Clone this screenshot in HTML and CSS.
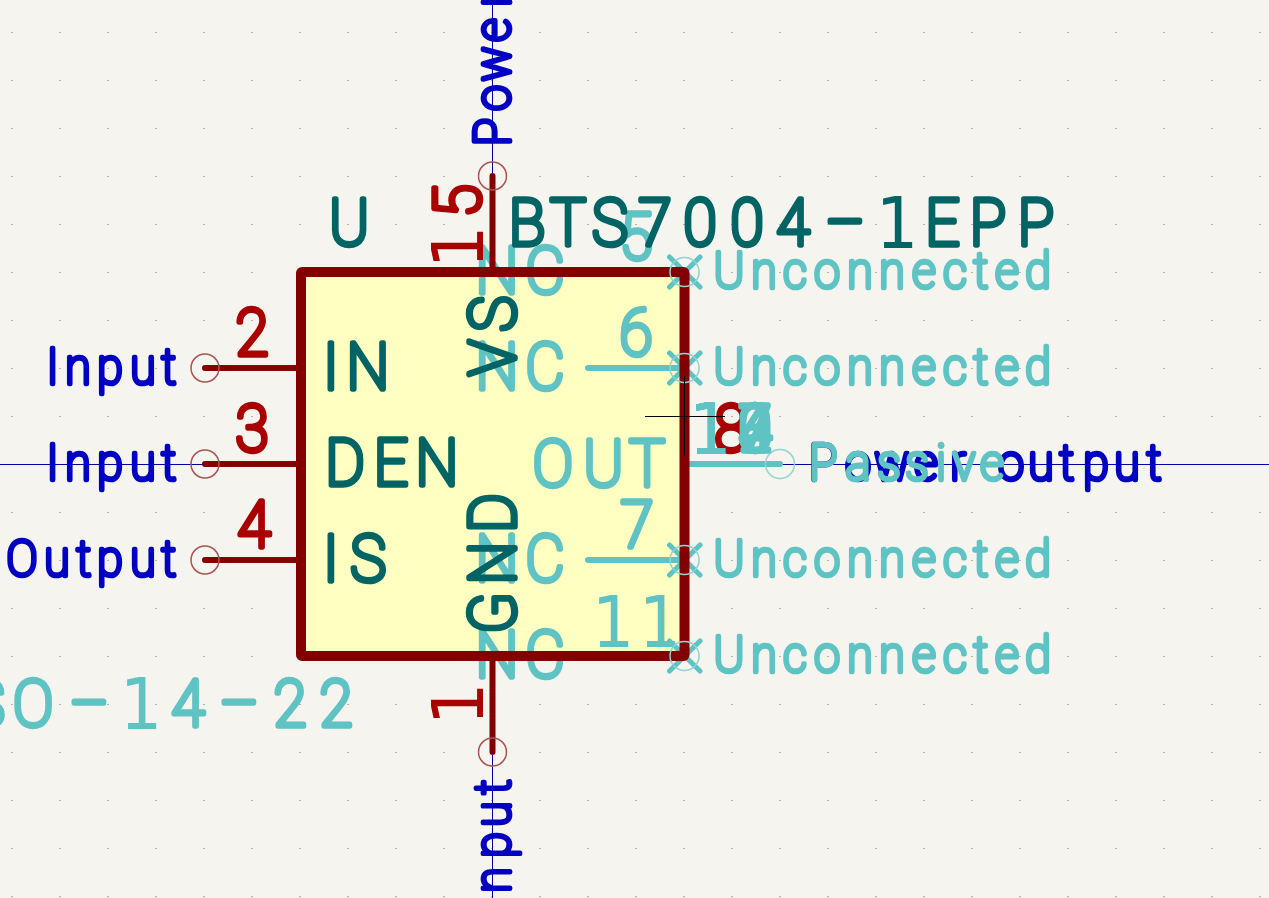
FILE: index.html
```html
<!DOCTYPE html>
<html lang="en">
<head>
<meta charset="utf-8">
<title>BTS7004-1EPP symbol</title>
<link rel="stylesheet" href="styles.css">
</head>
<body>
<main class="canvas">
<svg class="sheet" width="1269" height="898" viewBox="0 0 1269 898" xmlns="http://www.w3.org/2000/svg">
  <defs>
    <pattern id="grid" x="11" y="32" width="48" height="48" patternUnits="userSpaceOnUse">
      <rect class="grid-dot" width="2" height="1"/>
    </pattern>
  </defs>
  <rect class="grid-fill" width="1269" height="898"/>
  <path class="axis" d="M0 464.5H204M780 464.5H1269M492.5 0V176M492.5 752V898"/>
  <rect class="body-fill" x="301" y="272" width="383.5" height="384"/>

  <g class="ghost-pin">
    <path d="M588 368H684M588 560H684M690 464H780"/>
    <path class="ghost-x" d="M669.5 257L700 287M700 257L669.5 287M669.5 353L700 383M700 353L669.5 383M669.5 545L700 575M700 545L669.5 575M669.5 641L700 671M700 641L669.5 671"/>
  </g>
  <g class="t ghost big" transform="scale(.93 1)">
    <text x="534.4 586" y="389.5">NC</text>
    <text x="534.4 586" y="293.5">NC</text>
    <text x="534.4 586" y="581.5">NC</text>
    <text x="534.4 586" y="677.5">NC</text>
    <text x="594.6 648.9 695.7" y="486">OUT</text>
    <text y="726.5"><tspan x="-14 35.5 95.7">SO–</tspan><tspan class="one" x="151.6" y="729">1</tspan><tspan x="202.2 257 311.8 361.3" y="726.5">4–22</tspan></text>
    <text x="683.9" y="259.5">5</text>
    <text x="683.9" y="355.5">6</text>
    <text x="684.9" y="547.5">7</text>
    <text class="one" x="659.1 709.7" y="647">11</text>
  </g>

  <rect class="outline" x="301" y="272" width="383.5" height="384" rx="1"/>
  <path class="pin" d="M205 368H300M205 464H300M205 560H300M492.5 176V272M492.5 656V752"/>
  <g class="pin-ring">
    <circle cx="205" cy="368" r="14"/>
    <circle cx="205" cy="464" r="14"/>
    <circle cx="205" cy="560" r="14"/>
    <circle cx="492.5" cy="176" r="14"/>
    <circle cx="492.5" cy="752" r="14"/>
  </g>
  <g class="ghost-ring">
    <circle cx="684.5" cy="272" r="14.5"/>
    <circle cx="684.5" cy="368" r="14.5"/>
    <circle cx="684.5" cy="560" r="14.5"/>
    <circle cx="684.5" cy="656" r="14.5"/>
    <circle cx="780" cy="464" r="14.5"/>
  </g>

  <g class="t kind small">
    <g transform="scale(.93 1)">
      <text x="56.5 83.9 118.3 153.8 181.7" y="384">Input</text>
      <text x="56.5 83.9 118.3 153.8 181.7" y="480">Input</text>
      <text x="23.7 61.3 90.3 118.3 153.8 181.7" y="576">Output</text>
      <text x="885 922.6 959.1 995.7 1030.1 1059.1 1087.1 1119.4 1147.3 1178.5 1211.8 1240.9" y="480">Power output</text>
    </g>
    <text transform="translate(510 0) rotate(-90) scale(.93 1)" x="-141.9 -105.4 -68.8 -32.3 1.1" y="0">Power</text>
    <text transform="translate(510 0) rotate(-90) scale(.93 1)" x="-946.2 -908.6 -875.3 -846.2" y="0">nput</text>
  </g>
  <g class="t ghost small" transform="scale(.93 1)">
    <text x="885.5 922.6 955.9 986 1011.8 1036.6 1066.7" y="480">Passive</text>
    <text x="783.9 821.5 854.8 889.2 924.7 959.1 993.5 1026.9 1054.8 1082.8 1116.1" y="288">Unconnected</text>
    <text x="783.9 821.5 854.8 889.2 924.7 959.1 993.5 1026.9 1054.8 1082.8 1116.1" y="384">Unconnected</text>
    <text x="783.9 821.5 854.8 889.2 924.7 959.1 993.5 1026.9 1054.8 1082.8 1116.1" y="576">Unconnected</text>
    <text x="783.9 821.5 854.8 889.2 924.7 959.1 993.5 1026.9 1054.8 1082.8 1116.1" y="672">Unconnected</text>
  </g>

  <g class="t num big">
    <g transform="scale(.93 1)">
      <text x="271" y="355.5">2</text>
      <text x="271" y="451.5">3</text>
      <text x="273.1" y="547.5">4</text>
      <text x="786" y="451.5">8</text>
    </g>
    <text transform="translate(480 0) rotate(-90) scale(.93 1)" y="0"><tspan class="one" x="-265.6" y="2.5">1</tspan><tspan x="-216.1" y="0">5</tspan></text>
    <text class="one" transform="translate(480 0) rotate(-90) scale(.93 1)" x="-757" y="2.5">1</text>
  </g>
  <g class="t ghost big" transform="scale(.93 1)">
    <text y="451.5"><tspan class="one" x="763.4" y="454">1</tspan><tspan x="811.8" y="451.5">0</tspan></text>
    <text y="451.5"><tspan class="one" x="763.4" y="454">1</tspan><tspan x="811.8" y="451.5">2</tspan></text>
    <text y="451.5"><tspan class="one" x="763.4" y="454">1</tspan><tspan x="811.8" y="451.5">3</tspan></text>
    <text y="451.5"><tspan class="one" x="763.4" y="454">1</tspan><tspan x="811.8" y="451.5">4</tspan></text>
    <text y="451.5"><tspan class="one" x="763.4" y="454">1</tspan><tspan x="811.8" y="451.5">7</tspan></text>
  </g>

  <g class="t name big">
    <g transform="scale(.93 1)">
      <text x="375.3" y="245.5">U</text>
      <text y="245.5"><tspan x="566.7 610.8 655.9 704.3 752.7 803.2 852.7 908.6">BTS7004–</tspan><tspan class="one" x="964.5" y="248">1</tspan><tspan x="1013.4 1062.4 1114" y="245.5">EPP</tspan></text>
      <text x="355.9 395.7" y="389.5">IN</text>
      <text x="355.9 395.7" y="581.5">IS</text>
      <text x="371 420.4 469.9" y="485.5">DEN</text>
    </g>
    <text transform="translate(514.5 0) rotate(-90) scale(.93 1)" x="-384.9 -337.6" y="0">VS</text>
    <text transform="translate(514.5 0) rotate(-90) scale(.93 1)" x="-659.1 -605.4 -551.6" y="0">GND</text>
  </g>

  <path class="cross" d="M645 416.5H725M684.5 376V456"/>
</svg>
</main>
</body>
</html>
```

FILE: styles.css
```css
html, body {
  margin: 0;
  padding: 0;
  background: #f5f4ef;
  overflow: hidden;
}
.canvas {
  width: 1269px;
  height: 898px;
  overflow: hidden;
}
.sheet { display: block; }
.grid-dot { fill: #b4b4ac; }
.grid-fill { fill: url(#grid); }
.axis { fill: none; stroke: #0000a0; stroke-width: 1; }
.body-fill { fill: #ffffc2; }
.outline { fill: none; stroke: #840000; stroke-width: 10; }
.pin { fill: none; stroke: #840000; stroke-width: 6; stroke-linecap: round; }
.pin-ring { fill: none; stroke: #a85454; stroke-width: 1.5; }
.ghost-pin { fill: none; stroke: #60c3c3; stroke-width: 6; stroke-linecap: round; }
.ghost-x { stroke-width: 5; }
.ghost-ring { fill: none; stroke: #8ed4d4; stroke-width: 1.5; }
.cross { fill: none; stroke: #000; stroke-width: 1; }
.t {
  font-family: "Roboto", "Inter", sans-serif;
  font-weight: 100;
  stroke-linejoin: round;
  stroke-linecap: round;
  text-anchor: middle;
}
.big { font-size: 65px; stroke-width: 5.5px; }
.small { font-size: 50px; stroke-width: 4.75px; }
.ghost { fill: #60c3c3; stroke: #60c3c3; }
.num { fill: #a90000; stroke: #a90000; }
.name { fill: #006464; stroke: #006464; }
.kind { fill: #0000c2; stroke: #0000c2; }
.one {
  font-family: "DejaVu Sans", sans-serif;
  font-size: 72px;
  font-weight: 400;
  stroke-width: 0;
}
```
